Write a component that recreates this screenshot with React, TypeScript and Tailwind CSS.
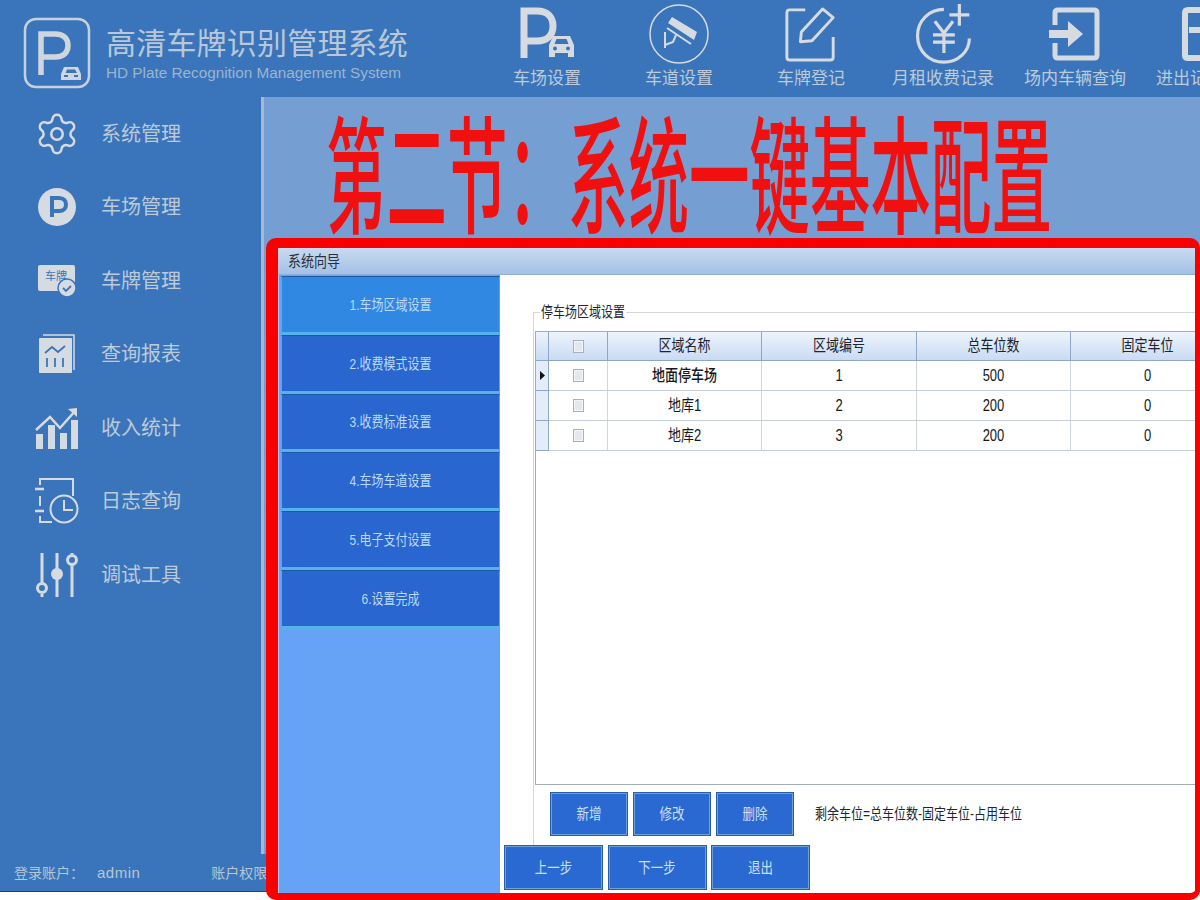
import React from 'react';
import { Settings } from 'lucide-react';

const ICON = '#d6dbe1';

const LogoIcon = () => (
  <svg width="68" height="72" viewBox="0 0 68 72" fill="none">
    <rect x="2" y="2" width="64" height="68" rx="11" stroke="#c6d1dd" strokeWidth="2.5" />
    <path d="M18 58V17h14c9 0 13 5 13 11.500S41 40 32 40H20" stroke="#cfd6de" strokeWidth="5.5" />
    <path d="M38 57l3-7h14l3 7v6H38z" fill="#cfd6de" />
    <path d="M42.500 56l1.500-3.500h8L54 56z" fill="#3a75bb" />
    <rect x="41" y="58" width="4" height="2" fill="#3a75bb" />
    <rect x="51" y="58" width="4" height="2" fill="#3a75bb" />
  </svg>
);

const ParkIcon = () => (
  <svg width="60" height="56" viewBox="0 0 60 56" fill="none">
    <path d="M7 52V5h13c10 0 16 6 16 15s-6 15-16 15H7" stroke={ICON} strokeWidth="7" />
    <path d="M32 51V39l4-9h17l4 9v12h-6v-4H38v4z" fill={ICON} />
    <path d="M37.500 38l2-5h10l2 5z" fill="#3a75bb" />
    <circle cx="38" cy="42.500" r="2" fill="#3a75bb" />
    <circle cx="51" cy="42.500" r="2" fill="#3a75bb" />
  </svg>
);

const CameraIcon = () => (
  <svg width="60" height="60" viewBox="0 0 60 60" fill="none">
    <circle cx="30" cy="30" r="29" stroke={ICON} strokeWidth="1.500" />
    <path d="M19 19l4-6 25 15-3 8z" fill={ICON} />
    <path d="M18 24l24 16" stroke={ICON} strokeWidth="2" />
    <path d="M16 28v16M16 41l8-3 3-7" stroke={ICON} strokeWidth="2" />
  </svg>
);

const EditIcon = () => (
  <svg width="54" height="58" viewBox="0 0 56 60" fill="none">
    <path d="M22 5H6Q3 5 3 8v46q0 3 3 3h42q3 0 3-3V33" stroke={ICON} strokeWidth="3" />
    <path d="M17 38l1-10L40 4l11 9-22 24z" stroke={ICON} strokeWidth="3" strokeLinejoin="round" />
  </svg>
);

const MoneyIcon = () => (
  <svg width="60" height="60" viewBox="0 0 62 66" fill="none">
    <path d="M32 6C16 6 3 18 3 35s13 29 29 29 28-12 28-26" stroke={ICON} strokeWidth="3.500" />
    <path d="M22 19l10 13 10-13M20 34h24M20 42h24M32 32v22" stroke={ICON} strokeWidth="3.500" />
    <path d="M49 0v24M38 12h22" stroke={ICON} strokeWidth="3.500" />
  </svg>
);

const EnterIcon = () => (
  <svg width="52" height="56" viewBox="0 0 52 56" fill="none">
    <path d="M6 19V7q0-3 3-3h36q3 0 3 3v42q0 3-3 3H9q-3 0-3-3V37" stroke={ICON} strokeWidth="5" />
    <path d="M0 24h19v-9l15 13-15 13v-9H0z" fill={ICON} />
  </svg>
);

const ExitIcon = () => (
  <svg width="52" height="56" viewBox="0 0 52 56" fill="none">
    <path d="M26 4H7q-3 0-3 3v42q0 3 3 3h19" stroke={ICON} strokeWidth="6" />
    <path d="M8 24h14" stroke={ICON} strokeWidth="6" />
  </svg>
);

const ParkCircle = () => (
  <svg width="40" height="40" viewBox="0 0 40 40">
    <circle cx="20" cy="20" r="19" fill={ICON} />
    <path d="M15 30V11h7c5 0 7 3 7 6.500S27 24 22 24h-7" fill="none" stroke="#3a75bb" strokeWidth="4" />
  </svg>
);

const PlateIcon = () => (
  <svg width="40" height="34" viewBox="0 0 40 34">
    <path d="M1 3q0-2 2-2h33q2 0 2 2v19l-14 3-3 2H3q-2 0-2-2z" fill={ICON} />
    <text x="19" y="16" fontSize="11" textAnchor="middle" fill="#3a75bb">车牌</text>
    <circle cx="30" cy="24" r="9" fill={ICON} stroke="#3a75bb" strokeWidth="1.500" />
    <path d="M26 24l3 3 5-5" fill="none" stroke="#3a75bb" strokeWidth="1.800" />
  </svg>
);

const ReportIcon = () => (
  <svg width="38" height="40" viewBox="0 0 38 40">
    <path d="M5 1h31v35" fill="none" stroke={ICON} strokeWidth="1.500" />
    <rect x="1" y="4" width="33" height="35" rx="1" fill={ICON} />
    <path d="M7 19l7-6 6 5 7-6" fill="none" stroke="#3a75bb" strokeWidth="1.800" />
    <path d="M9 33v-9M17 33v-9M25 33v-9" stroke="#3a75bb" strokeWidth="1.800" />
  </svg>
);

const IncomeIcon = () => (
  <svg width="44" height="44" viewBox="0 0 44 44" fill="none">
    <path d="M1 24l14-13 10 11L41 4" stroke={ICON} strokeWidth="2.500" />
    <path d="M33 3l9-1v9z" fill={ICON} />
    <rect x="1" y="28" width="7" height="15" fill={ICON} />
    <rect x="13" y="19" width="7" height="24" fill={ICON} />
    <rect x="25" y="27" width="7" height="16" fill={ICON} />
    <rect x="36" y="14" width="7" height="29" fill={ICON} />
  </svg>
);

const LogIcon = () => (
  <svg width="44" height="46" viewBox="0 0 44 46" fill="none">
    <path d="M5 7V1h33v17M5 18v10M5 38v6h12" stroke={ICON} strokeWidth="2" />
    <path d="M0 11h9M0 33h9" stroke={ICON} strokeWidth="2.500" />
    <circle cx="29" cy="31" r="13.500" stroke={ICON} strokeWidth="2" />
    <path d="M29 22v10h9" stroke={ICON} strokeWidth="2" />
  </svg>
);

const SliderIcon = () => (
  <svg width="44" height="46" viewBox="0 0 44 46" fill="none">
    <path d="M7 1v30M7 42v3M22 1v44M37 12v33M37 1v1" stroke={ICON} strokeWidth="3" />
    <circle cx="7" cy="36" r="4.500" stroke={ICON} strokeWidth="3" />
    <circle cx="22" cy="22" r="6" fill={ICON} />
    <circle cx="37" cy="8" r="4.500" stroke={ICON} strokeWidth="3" />
  </svg>
);

const topItems = [
  { label: '车场设置', icon: <ParkIcon /> },
  { label: '车道设置', icon: <CameraIcon /> },
  { label: '车牌登记', icon: <EditIcon /> },
  { label: '月租收费记录', icon: <MoneyIcon /> },
  { label: '场内车辆查询', icon: <EnterIcon /> },
  { label: '进出记录查询', icon: <ExitIcon /> },
];

const sideItems = [
  { label: '系统管理', icon: <Settings size={50} strokeWidth={1.3} color={ICON} /> },
  { label: '车场管理', icon: <ParkCircle /> },
  { label: '车牌管理', icon: <PlateIcon /> },
  { label: '查询报表', icon: <ReportIcon /> },
  { label: '收入统计', icon: <IncomeIcon /> },
  { label: '日志查询', icon: <LogIcon /> },
  { label: '调试工具', icon: <SliderIcon /> },
];

const steps = ['1.车场区域设置', '2.收费模式设置', '3.收费标准设置', '4.车场车道设置', '5.电子支付设置', '6.设置完成'];

const rows = [
  { name: '地面停车场', id: '1', total: '500', fixed: '0', current: true },
  { name: '地库1', id: '2', total: '200', fixed: '0', current: false },
  { name: '地库2', id: '3', total: '200', fixed: '0', current: false },
];

const gridCols = 'grid grid-cols-[13px_59px_154px_155px_154px_154px] w-[689px]';

const Tall = ({ children }: { children: React.ReactNode }) => (
  <span className="inline-block scale-y-[1.22]">{children}</span>
);

const Check = () => (
  <span className="block w-[11px] h-[13px] border border-[#a8b0ba] bg-[#e4e8ed] shadow-[inset_0_0_0_1px_#f4f6f8]" />
);

const BlueButton = ({ label, wide }: { label: string; wide?: boolean }) => (
  <button
    className={`${wide ? 'w-[99px] h-[45px] pt-[1px]' : 'w-[78px] h-[44px]'} flex items-center justify-center border-2 border-[#6a9fd8] outline outline-[#2a5fa8] -outline-offset-1 bg-[#2a69d2] text-[12.500px] text-[#c8e0f8]`}
  >
    <Tall>{label}</Tall>
  </button>
);

export default function App() {
  return (
    <div className="relative w-[1200px] h-[900px] overflow-hidden bg-white font-['Liberation_Sans','Noto_Sans_CJK_SC',sans-serif]">
      <div className="h-[892px] flex flex-col bg-[#3a75bb] border-b border-[#26466e]">
        {/* top bar */}
        <div className="h-[97px] shrink-0 flex">
          <div className="w-[481px] shrink-0 flex items-start pl-[23px] pt-[17px]">
            <LogoIcon />
            <div className="ml-[15px] mt-[9px]">
              <div className="text-[30px] leading-[36px] tracking-[0.2px] text-[#b9c8d8]">高清车牌识别管理系统</div>
              <div className="mt-[2px] text-[15.300px] leading-[18px] text-[#9db4cf]">HD Plate Recognition Management System</div>
            </div>
          </div>
          {topItems.map(item => (
            <div key={item.label} className="w-[132px] shrink-0 flex flex-col items-center">
              <div className="h-[68px] flex items-center justify-center">{item.icon}</div>
              <div className="text-[17px] leading-[22px] whitespace-nowrap text-[#bccad9]">{item.label}</div>
            </div>
          ))}
        </div>

        <div className="flex-1 flex min-h-0">
          {/* left menu */}
          <div className="w-[261px] shrink-0 pl-[34px]">
            {sideItems.map(item => (
              <div key={item.label} className="h-[73.500px] flex items-center">
                <div className="w-[46px] flex justify-center">{item.icon}</div>
                <span className="ml-[21px] text-[20px] text-[#bccad9]">{item.label}</span>
              </div>
            ))}
          </div>
          <div className="flex-1 border-l-[3px] border-[#a4b9d4] bg-[#759fd2] pl-[62px] pt-[48px]">
            <div className="text-[60.500px] leading-[70px] font-medium whitespace-nowrap text-[#f01010] scale-y-[2.1] origin-center">
              第二节：系统一键基本配置
            </div>
          </div>
        </div>

        {/* status bar */}
        <div className="h-[37px] shrink-0 flex items-center pl-[14px] pt-[2px] text-[14px] text-[#b8c6d6] whitespace-nowrap">
          <span>登录账户：</span>
          <span className="ml-[13px] text-[15px] tracking-[0.5px]">admin</span>
          <span className="ml-[71px]">账户权限</span>
        </div>
      </div>

      {/* wizard window with the red marker frame */}
      <div className="absolute left-[266px] top-[238px] right-0 bottom-0 border-l-[12px] border-t-[10px] border-r-[5px] border-b-[7px] border-[#f80000] rounded-[10px] flex flex-col bg-white overflow-hidden">
        <div className="h-[27px] shrink-0 flex items-center pl-[10px] pt-[2px] text-[13px] text-[#27303c] bg-gradient-to-b from-[#c9daf0] to-[#a4c1e6] border-b border-[#8fb0da]">
          <Tall>系统向导</Tall>
        </div>
        <div className="flex-1 flex min-h-0">
          <div className="w-[222px] shrink-0 bg-[#66a3f7] pl-[2px] pt-[1px] border-l border-[#a9c8ee]">
            {steps.map((step, i) => (
              <div
                key={step}
                className={`h-[58.800px] pt-[1px] flex items-center justify-center text-[12px] text-[#b9daf8] border-x border-x-[#5aa9e6] border-t border-t-[#1d5aa8] border-b-[3px] border-b-[#58b2ea] ${i === 0 ? 'bg-[#3088e2]' : 'bg-[#2a66cf]'}`}
              >
                <Tall>{step}</Tall>
              </div>
            ))}
          </div>

          <div className="flex-1 min-w-0 flex flex-col pb-[3px]">
            <fieldset className="flex-1 min-h-0 min-w-0 ml-[33px] mt-[28px] border-t border-l border-[#d4d8dc]">
              <legend className="ml-[6px] h-[18px] px-[1px] text-[12px] leading-[18px] text-[#1f2630]">
                <Tall>停车场区域设置</Tall>
              </legend>
              <div className="mt-[10px] ml-[1px] h-[454px] border-l border-b border-t border-[#a4acb8] overflow-hidden">
                <div className={`${gridCols} h-[29px] text-[13px] text-[#1b2430] bg-gradient-to-b from-[#eef4fc] to-[#c9dbf3] border-b border-[#8fa6c4]`}>
                  <div className="border-r border-[#8fa6c4]" />
                  <div className="border-r border-[#8fa6c4] flex items-center justify-center"><Check /></div>
                  {['区域名称', '区域编号', '总车位数', '固定车位'].map(h => (
                    <div key={h} className="border-r border-[#8fa6c4] flex items-center justify-center"><Tall>{h}</Tall></div>
                  ))}
                </div>
                {rows.map(row => (
                  <div key={row.id} className={`${gridCols} h-[30px] text-[13px] text-[#15181d] border-b border-[#c6ceda]`}>
                    <div className="bg-[#e3edf9] border-r border-b border-[#8fa6c4] flex items-center justify-center -mb-[1px]">
                      {row.current && <svg width="5" height="9" viewBox="0 0 5 9"><path d="M0 0l5 4.500L0 9z" fill="#111" /></svg>}
                    </div>
                    <div className="border-r border-[#cfd6e0] flex items-center justify-center"><Check /></div>
                    <div className={`border-r border-[#cfd6e0] flex items-center justify-center ${row.current ? 'font-medium' : ''}`}><Tall>{row.name}</Tall></div>
                    <div className="border-r border-[#cfd6e0] flex items-center justify-center"><Tall>{row.id}</Tall></div>
                    <div className="border-r border-[#cfd6e0] flex items-center justify-center"><Tall>{row.total}</Tall></div>
                    <div className="border-r border-[#cfd6e0] flex items-center justify-center"><Tall>{row.fixed}</Tall></div>
                  </div>
                ))}
              </div>
              <div className="mt-[7px] ml-[16px] flex items-center gap-[5px]">
                <BlueButton label="新增" />
                <BlueButton label="修改" />
                <BlueButton label="删除" />
                <span className="ml-[16px] pb-[1px] text-[12px] text-[#20262e]"><Tall>剩余车位=总车位数-固定车位-占用车位</Tall></span>
              </div>
            </fieldset>
            <div className="ml-[4px] flex gap-[4.500px]">
              <BlueButton label="上一步" wide />
              <BlueButton label="下一步" wide />
              <BlueButton label="退出" wide />
            </div>
          </div>
        </div>
      </div>
    </div>
  );
}
